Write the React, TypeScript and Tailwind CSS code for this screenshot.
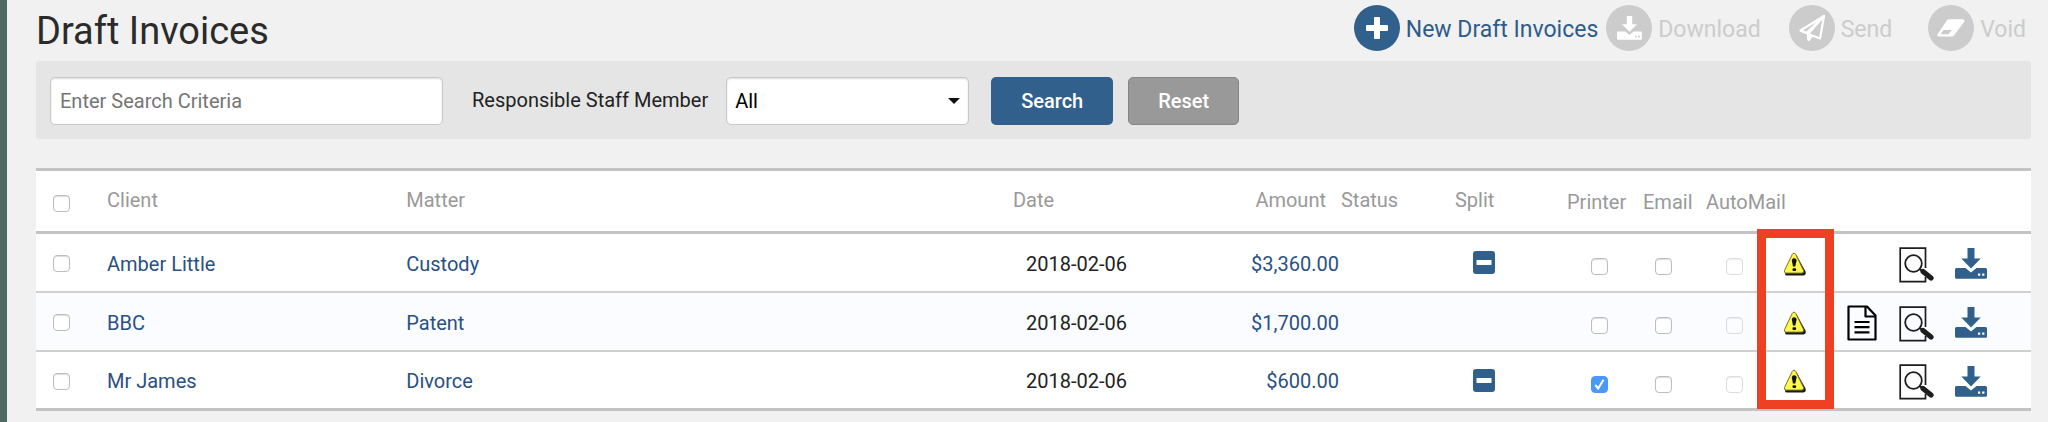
import { useState } from 'react';
import type { ComponentProps, ReactNode } from 'react';
import clsx from 'clsx';

interface Invoice {
  id: number;
  client: string;
  matter: string;
  date: string;
  amount: string;
  split: boolean;
  printer: boolean;
  hasNote: boolean;
}

const INVOICES: Invoice[] = [
  { id: 1, client: 'Amber Little', matter: 'Custody', date: '2018-02-06', amount: '$3,360.00', split: true, printer: false, hasNote: false },
  { id: 2, client: 'BBC', matter: 'Patent', date: '2018-02-06', amount: '$1,700.00', split: false, printer: false, hasNote: true },
  { id: 3, client: 'Mr James', matter: 'Divorce', date: '2018-02-06', amount: '$600.00', split: true, printer: true, hasNote: false },
];

function DownloadIcon({ className }: { className?: string }) {
  return (
    <svg viewBox="0 0 32 31" className={className} fill="currentColor" aria-hidden="true">
      <path d="M12.5 0h7v10.5h6.2L16 20.5 6.3 10.5h6.2z" />
      <path
        fillRule="evenodd"
        d="M1.5 20h9l5.5 4.600 5.500-4.600h9q1.500 0 1.500 1.500v7.800q0 1.500-1.500 1.500h-29Q0 30.800 0 29.300v-7.800Q0 20 1.500 20zM23 25.600v2.200h2.200v-2.200zm4.200 0v2.200h2.200v-2.200z"
      />
    </svg>
  );
}

function PlusIcon() {
  return (
    <svg viewBox="0 0 22 22" className="size-[22px]" fill="currentColor" aria-hidden="true">
      <path d="M9 0h4q1 0 1 1v7h7q1 0 1 1v4q0 1-1 1h-7v7q0 1-1 1H9q-1 0-1-1v-7H1q-1 0-1-1V9q0-1 1-1h7V1q0-1 1-1z" />
    </svg>
  );
}

function PlaneIcon() {
  return (
    <svg viewBox="0 0 28 28" className="size-7" fill="none" stroke="currentColor" strokeWidth="2.2" strokeLinejoin="round" aria-hidden="true">
      <path d="M2.5 16.5 26 2l-4 22.5-8.5-3.2z" />
      <path d="M2.5 16.5 8.5 19 26 2 10.500 19.500V26l4-4.500" />
      <path d="M9 19v7l5-5z" fill="currentColor" stroke="none" />
    </svg>
  );
}

function EraserIcon() {
  return (
    <svg viewBox="0 0 30 20" className="h-5 w-[30px]" aria-hidden="true">
      <path d="M13 1.200h14q2 .3 1.400 2.300L18 17.500q-.8 1-2 1H2.500q-1.800-.3-1.200-2L11 2.200q.8-1 2-1z" fill="currentColor" />
      <path d="M7.500 12h8.300l-3.300 4.300H4.500z" fill="#ccc" />
    </svg>
  );
}

function WarningIcon() {
  return (
    <svg viewBox="0 0 24 24" className="size-6" role="img" aria-label="Warning">
      <path d="M12 2.500q1.200 0 2 1.500l8.500 15.500q1 3.500-2 4H4q-2 0-2-1.500z" fill="#1a1a1a" />
      <path d="M11 1.200q1.200 0 1.800 1.300l7.700 16q.6 2.300-1.500 2.600H3q-2.200-.3-1.500-2.600l7.700-16q.6-1.300 1.800-1.300z" fill="#fdf84b" stroke="#77742c" />
      <path d="M8.800 8.500q.2-2.300 2.400-2.300t2.400 2.300l-1.300 6H10z" fill="#111" />
      <rect x="9.500" y="16.300" width="3.600" height="2.600" rx="1" fill="#111" />
    </svg>
  );
}

function NoteIcon() {
  return (
    <svg viewBox="0 0 30 36" className="h-9 w-[30px]" fill="none" stroke="#000" strokeWidth="2.200" strokeLinejoin="round" aria-hidden="true">
      <path d="M1.500 1.500h18.500l8.500 9v24h-27z" />
      <path d="M18.500 1.500v10h10" />
      <path d="M7.500 17h15M7.500 22.200h15M7.500 27.400h15" />
    </svg>
  );
}

function PreviewIcon() {
  return (
    <svg viewBox="0 0 35 36" className="h-9 w-[35px]" fill="none" stroke="#1d1d1d" aria-hidden="true">
      <path d="M26.500 21V1.200H1.200v33.400h25.300V30" strokeWidth="1.700" />
      <circle cx="14.500" cy="16.500" r="8.300" strokeWidth="1.800" />
      <path d="m20.800 22 3 2.500" strokeWidth="2" />
      <path d="M24 24.500 32 31" strokeWidth="5.200" strokeLinecap="round" />
    </svg>
  );
}

function SplitIcon() {
  return (
    <svg viewBox="0 0 22 23" className="h-[23px] w-[22px]" role="img" aria-label="Split">
      <rect width="22" height="23" rx="3" fill="#30608b" />
      <rect x="3.500" y="9" width="15" height="5" rx="0.500" fill="#fff" />
    </svg>
  );
}

function Checkbox({ className, ...props }: ComponentProps<'input'>) {
  return (
    <span className={clsx('grid size-[17px]', className)}>
      <input
        type="checkbox"
        className="peer col-start-1 row-start-1 size-[17px] appearance-none rounded-[4px] border border-[#bdbdbd] bg-white shadow-[inset_0_1px_1px_#ddd] checked:border-[#4a98f7] checked:bg-[#4a98f7] checked:shadow-none disabled:opacity-50"
        {...props}
      />
      <svg viewBox="0 0 17 17" className="pointer-events-none invisible col-start-1 row-start-1 size-[17px] peer-checked:visible" fill="none" stroke="#fff" strokeWidth="2" aria-hidden="true">
        <path d="m4.300 9 2.900 3.500 5.300-8.700" />
      </svg>
    </span>
  );
}

function Action({ label, icon, disabled, className }: { label: string; icon: ReactNode; disabled?: boolean; className?: string }) {
  return (
    <button type="button" disabled={disabled} className={clsx('flex items-center gap-[6px] text-[23px]', disabled ? 'text-[#ccc]' : 'text-[#2e5c8a]', className)}>
      <span className={clsx('flex size-[46px] items-center justify-center rounded-full text-white', disabled ? 'bg-[#ccc]' : 'bg-[#30608b]')}>
        {icon}
      </span>
      <span className="pt-1">{label}</span>
    </button>
  );
}

export default function App() {
  const [search, setSearch] = useState('');
  const [printed, setPrinted] = useState(INVOICES.filter((i) => i.printer).map((i) => i.id));

  const togglePrinter = (id: number) =>
    setPrinted((prev) => (prev.includes(id) ? prev.filter((p) => p !== id) : [...prev, id]));

  return (
    <div className="min-h-screen border-l-[7px] border-[#4f6a63] bg-[#f1f1f1] pr-[17px] pl-[29px] font-['Roboto',sans-serif] text-xl text-[#222]">
      {/* Title and actions */}
      <header className="flex h-[61px] items-start justify-between">
        <h1 className="pt-[10px] text-[38px] leading-[42px] text-[#2b2b2b]">Draft Invoices</h1>
        <div className="flex pt-[5px] pr-[5px]">
          <Action label="New Draft Invoices" icon={<PlusIcon />} className="mr-2" />
          <Action label="Download" icon={<DownloadIcon className="h-6 w-[25px]" />} disabled className="mr-7" />
          <Action label="Send" icon={<PlaneIcon />} disabled className="mr-9" />
          <Action label="Void" icon={<EraserIcon />} disabled />
        </div>
      </header>

      {/* Filters */}
      <form className="flex h-[78px] items-center rounded-[3px] bg-[#e5e5e5] px-[14px] pt-[2px]" onSubmit={(e) => e.preventDefault()}>
        <input
          type="text"
          aria-label="Search criteria"
          placeholder="Enter Search Criteria"
          value={search}
          onChange={(e) => setSearch(e.target.value)}
          className="h-12 w-[393px] rounded-[5px] border border-[#c8c8c8] bg-white px-[9px] shadow-[inset_0_1px_2px_#ddd] placeholder:text-[#757575]"
        />
        <label htmlFor="staff" className="ml-[29px] pb-[2px] whitespace-nowrap">
          Responsible Staff Member
        </label>
        <div className="relative ml-[18px]">
          <select id="staff" className="h-12 w-[243px] appearance-none rounded-[5px] border border-[#c8c8c8] bg-white px-2 text-black shadow-[inset_0_1px_2px_#ddd]">
            <option>All</option>
          </select>
          <svg viewBox="0 0 12 6" className="pointer-events-none absolute top-[21px] right-[9px] h-[6px] w-3" aria-hidden="true">
            <path d="M0 0h12L6 6z" fill="#111" />
          </svg>
        </div>
        <button type="submit" className="ml-[22px] h-12 w-[122px] rounded-[5px] bg-[#30608b] font-medium text-white">
          Search
        </button>
        <button type="reset" onClick={() => setSearch('')} className="ml-[15px] h-12 w-[111px] rounded-[5px] border border-[#858585] bg-[#999] font-medium text-white">
          Reset
        </button>
      </form>

      {/* Invoice list */}
      <div className="relative mt-[29px]">
        <table className="w-full table-fixed border-separate border-spacing-0 border-t-[3px] border-[#c3c3c3] bg-white text-left leading-6">
          <colgroup>
            <col className="w-[71px]" />
            <col className="w-[15%]" />
            <col />
            <col className="w-[150px]" />
            <col className="w-[176px]" />
            <col className="w-[116px]" />
            <col className="w-[112px]" />
            <col className="w-[76px]" />
            <col className="w-[63px]" />
            <col className="w-[51px]" />
            <col className="w-[77px]" />
            <col className="w-[56px]" />
            <col className="w-[55px]" />
            <col className="w-[86px]" />
          </colgroup>
          <thead>
            <tr className="h-[63px] text-[#999] *:border-b-[3px] *:border-[#c3c3c3] *:font-normal">
              <th className="pt-1 pl-[17px]">
                <Checkbox aria-label="Select all invoices" />
              </th>
              <th className="pb-[2px]">Client</th>
              <th className="pb-[2px]">Matter</th>
              <th className="pb-[2px]">Date</th>
              <th className="pr-[13px] pb-[2px] text-right">Amount</th>
              <th className="pb-[2px] pl-[2px]">Status</th>
              <th className="pb-[2px]">Split</th>
              <th className="pt-[2px]">Printer</th>
              <th className="pt-[2px]">Email</th>
              <th className="pt-[2px]" colSpan={2}>AutoMail</th>
              <td colSpan={3} />
            </tr>
          </thead>
          <tbody>
            {INVOICES.map((inv) => (
              <tr key={inv.id} className="h-[59px] *:border-b-2 *:border-[#d0d0d0] even:bg-[#fafcff] last:*:border-b-[3px] last:*:border-[#c3c3c3]">
                <td className="pt-[2px] pl-[17px]">
                  <Checkbox aria-label={`Select ${inv.client}`} />
                </td>
                <td className="pt-[2px]">
                  <a href="#client" className="text-[#2a5082]">{inv.client}</a>
                </td>
                <td className="pt-[2px]">
                  <a href="#matter" className="text-[#2a5082]">{inv.matter}</a>
                </td>
                <td className="pt-[2px] pl-[13px]">{inv.date}</td>
                <td className="pt-[2px] text-right">
                  <a href="#invoice" className="text-[#2a5082]">{inv.amount}</a>
                </td>
                <td />
                <td className="pl-[18px]">{inv.split && <SplitIcon />}</td>
                <td className="pt-2 pl-6">
                  <Checkbox aria-label="Printer" checked={printed.includes(inv.id)} onChange={() => togglePrinter(inv.id)} />
                </td>
                <td className="pt-2 pl-3">
                  <Checkbox aria-label="Email" />
                </td>
                <td className="pt-2 pl-5">
                  <Checkbox aria-label="AutoMail" disabled />
                </td>
                <td className="pt-[2px] pl-[26px]">
                  <WarningIcon />
                </td>
                <td className="pt-[2px] pl-[13px]">
                  {inv.hasNote && (
                    <button type="button" aria-label="Notes" className="block">
                      <NoteIcon />
                    </button>
                  )}
                </td>
                <td className="pt-1 pl-[9px]">
                  <button type="button" aria-label="Preview" className="block">
                    <PreviewIcon />
                  </button>
                </td>
                <td className="pt-[2px] pl-[10px]">
                  <button type="button" aria-label="Download" className="block text-[#30608b]">
                    <DownloadIcon className="h-[31px] w-8" />
                  </button>
                </td>
              </tr>
            ))}
          </tbody>
        </table>

        {/* Highlight over the warning column */}
        <div className="pointer-events-none absolute top-[61px] right-[197px] bottom-[2px] w-[77px] border-[9px] border-[#ee4023]" />
      </div>
    </div>
  );
}
